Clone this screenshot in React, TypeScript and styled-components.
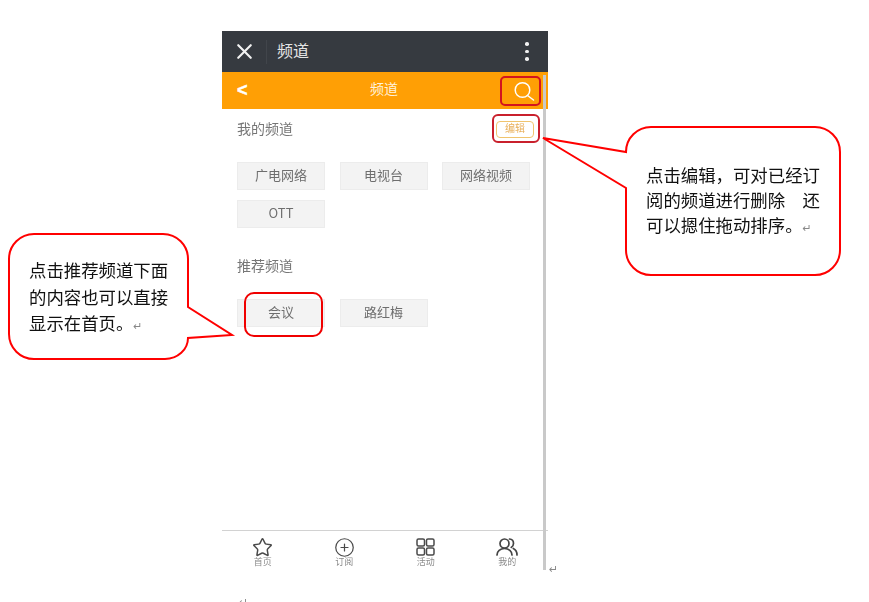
import styled, { createGlobalStyle } from "styled-components";
import { CirclePlus, Star, X } from "lucide-react";

const GlobalStyle = createGlobalStyle`
  html, body {
    margin: 0;
    padding: 0;
    background: #fff;
    font-family: "Noto Sans CJK SC", "Liberation Sans", sans-serif;
  }
`;

const Page = styled.div`
  position: relative;
  width: 869px;
  height: 602px;
  overflow: hidden;
  padding: 31px 0 0 222px;
  box-sizing: border-box;
`;

const Phone = styled.div`
  width: 326px;
  height: 539px;
  display: flex;
  flex-direction: column;
  filter: blur(0.35px);
`;

const TitleBar = styled.div`
  height: 41px;
  flex: none;
  background: #363a40;
  display: flex;
  align-items: center;
  color: #e4e4e4;
  font-size: 16px;
`;

const CloseButton = styled.div`
  width: 44px;
  height: 24px;
  display: flex;
  align-items: center;
  justify-content: center;
  border-right: 1px solid #41454b;
  margin-right: 10px;
  color: #f2f2f2;
`;

const TitleText = styled.div`
  flex: 1;
  padding-bottom: 4px;
`;

const Kebab = styled.div`
  width: 4px;
  margin-right: 19px;
  display: flex;
  flex-direction: column;
  gap: 4px;
`;

const Dot = styled.span`
  width: 3.5px;
  height: 3.5px;
  border-radius: 50%;
  background: #f2f2f2;
`;

const OrangeBar = styled.div`
  height: 37px;
  flex: none;
  background: #ff9f05;
  display: grid;
  grid-template-columns: 60px 1fr 60px;
  align-items: center;
  color: #fff2dc;
  font-size: 14px;
  text-align: center;
`;

const BarTitle = styled.span`
  padding: 0 2px 5px 0;
`;

const BackMark = styled.div`
  font-family: "Liberation Sans", sans-serif;
  font-weight: 700;
  font-size: 18px;
  color: #fff;
  text-align: left;
  padding-left: 15px;
  -webkit-text-stroke: 0.5px #fff;
`;

const SearchSlot = styled.div`
  display: flex;
  justify-content: flex-end;
  padding-right: 13px;
`;

const Content = styled.div`
  flex: 1;
  padding: 0 15px;
`;

const SectionHead = styled.div<{ $top: number }>`
  display: flex;
  align-items: center;
  justify-content: space-between;
  height: 20px;
  margin-top: ${(p) => p.$top}px;
  font-size: 14px;
  color: #767676;
`;

const EditButton = styled.div`
  width: 38px;
  height: 17px;
  box-sizing: border-box;
  margin: 3px -1px 0 0;
  border: 1px solid #f0c46e;
  border-radius: 4px;
  color: #e9b05c;
  font-size: 10px;
  line-height: 12px;
  text-align: center;
`;

const ChipGrid = styled.div<{ $top: number }>`
  display: grid;
  grid-template-columns: repeat(3, 88px);
  column-gap: 14.5px;
  row-gap: 10px;
  margin-top: ${(p) => p.$top}px;
`;

const Chip = styled.div`
  height: 28px;
  box-sizing: border-box;
  background: #f3f3f3;
  border: 1px solid #ececec;
  color: #6e6e6e;
  font-size: 13px;
  line-height: 24px;
  text-align: center;
`;

const BottomNav = styled.div`
  height: 39px;
  flex: none;
  border-top: 1px solid #d2d2d2;
  display: grid;
  grid-template-columns: repeat(4, 1fr);
`;

const NavItem = styled.div`
  display: flex;
  flex-direction: column;
  align-items: center;
  padding-top: 6px;
  color: #4a4a4a;
  font-size: 9px;
  line-height: 10px;
`;

const NavLabel = styled.span`
  color: #8a8a8a;
`;

const IconBox = styled.div`
  height: 20px;
  display: flex;
  align-items: center;
  justify-content: center;
`;

const ScrollTrack = styled.div`
  position: absolute;
  left: 543px;
  top: 75px;
  width: 3px;
  height: 495px;
  background: #c9c9c9;
`;

const Highlight = styled.div<{ $x: number; $y: number; $w: number; $h: number; $r: number; $color: string }>`
  position: absolute;
  left: ${(p) => p.$x}px;
  top: ${(p) => p.$y}px;
  width: ${(p) => p.$w}px;
  height: ${(p) => p.$h}px;
  box-sizing: border-box;
  border: 2px solid ${(p) => p.$color};
  border-radius: ${(p) => p.$r}px;
`;

const Bubble = styled.svg`
  position: absolute;
  left: 0;
  top: 0;
`;

const BubbleText = styled.div<{ $x: number; $y: number; $w: number; $lh: number }>`
  position: absolute;
  left: ${(p) => p.$x}px;
  top: ${(p) => p.$y}px;
  width: ${(p) => p.$w}px;
  font-size: 17.4px;
  line-height: ${(p) => p.$lh}px;
  color: #111;
`;

const ReturnMark = styled.span`
  font-family: "DejaVu Sans", sans-serif;
  font-size: 11px;
  color: #888;
`;

const LooseMark = styled(ReturnMark)<{ $x: number; $y: number }>`
  position: absolute;
  left: ${(p) => p.$x}px;
  top: ${(p) => p.$y}px;
  line-height: 12px;
`;

function SearchIcon() {
  return (
    <svg width="22" height="22" viewBox="0 0 22 22" fill="none" stroke="#fff" strokeWidth="1.5" strokeLinecap="round">
      <circle cx="9.500" cy="10" r="7.300" />
      <path d="M14.500 15.500l6 4.500" />
    </svg>
  );
}

function GridIcon() {
  return (
    <svg width="19" height="18" viewBox="0 0 19 18" fill="none" stroke="#4a4a4a" strokeWidth="1.5">
      <rect x="1" y="1" width="7.500" height="7" rx="1.500" />
      <rect x="10.500" y="1" width="7.500" height="7" rx="1.500" />
      <rect x="1" y="10" width="7.500" height="7" rx="1.500" />
      <rect x="10.500" y="10" width="7.500" height="7" rx="1.500" />
    </svg>
  );
}

function PeopleIcon() {
  return (
    <svg width="22" height="18" viewBox="0 0 22 18" fill="none" stroke="#444" strokeWidth="1.7" strokeLinecap="round">
      <circle cx="8.500" cy="5.500" r="4.500" />
      <path d="M1 17c0-3.800 3.200-6.500 7.500-6.500S16 13.200 16 17" />
      <path d="M13.500 1c2.400.2 4 2.100 4 4.400 0 1.700-.8 3.100-2.300 4" />
      <path d="M17.300 10.500c2.200 1 3.700 3.300 3.700 6.500" />
    </svg>
  );
}

const MY_CHANNELS = ["广电网络", "电视台", "网络视频", "OTT"];
const SUGGESTED = ["会议", "路红梅"];

export default function App() {
  return (
    <Page>
      <GlobalStyle />
      <Phone>
        <TitleBar>
          <CloseButton>
            <X size={25} strokeWidth={2.1} />
          </CloseButton>
          <TitleText>频道</TitleText>
          <Kebab>
            <Dot />
            <Dot />
            <Dot />
          </Kebab>
        </TitleBar>
        <OrangeBar>
          <BackMark>&lt;</BackMark>
          <BarTitle>频道</BarTitle>
          <SearchSlot>
            <SearchIcon />
          </SearchSlot>
        </OrangeBar>
        <Content>
          <SectionHead $top={9}>
            我的频道
            <EditButton>编辑</EditButton>
          </SectionHead>
          <ChipGrid $top={24}>
            {MY_CHANNELS.map((c) => (
              <Chip key={c}>{c}</Chip>
            ))}
          </ChipGrid>
          <SectionHead $top={27}>推荐频道</SectionHead>
          <ChipGrid $top={24}>
            {SUGGESTED.map((c) => (
              <Chip key={c}>{c}</Chip>
            ))}
          </ChipGrid>
        </Content>
        <BottomNav>
          <NavItem>
            <IconBox>
              <Star size={21} strokeWidth={1.7} />
            </IconBox>
            <NavLabel>首页</NavLabel>
          </NavItem>
          <NavItem>
            <IconBox>
              <CirclePlus size={21} strokeWidth={1.4} />
            </IconBox>
            <NavLabel>订阅</NavLabel>
          </NavItem>
          <NavItem>
            <IconBox>
              <GridIcon />
            </IconBox>
            <NavLabel>活动</NavLabel>
          </NavItem>
          <NavItem>
            <IconBox>
              <PeopleIcon />
            </IconBox>
            <NavLabel>我的</NavLabel>
          </NavItem>
        </BottomNav>
      </Phone>

      <ScrollTrack />
      <Highlight $x={500} $y={76} $w={41} $h={30} $r={5} $color="#d3141f" />
      <Highlight $x={492} $y={114} $w={48} $h={29} $r={6} $color="#c9202c" />
      <Highlight $x={244} $y={292} $w={79} $h={45} $r={10} $color="#f00000" />

      <Bubble width="869" height="602" fill="#fff" stroke="#ff0000" strokeWidth="2">
        <path d="M651 127H815a25 25 0 0 1 25 25V250a25 25 0 0 1 -25 25H651a25 25 0 0 1 -25 -25V188L543 138 626 152a25 25 0 0 1 25 -25Z" />
        <path d="M34 234H163a25 25 0 0 1 25 25V307L232 335 188 338A23 21 0 0 1 165 359H34a25 25 0 0 1 -25 -25V259a25 25 0 0 1 25 -25Z" />
      </Bubble>
      <BubbleText $x={646} $y={162} $w={176} $lh={25}>
        点击编辑，可对已经订阅的频道进行删除&#12288;还可以摁住拖动排序。<ReturnMark>↵</ReturnMark>
      </BubbleText>
      <BubbleText $x={29} $y={257} $w={142} $lh={26.500}>
        点击推荐频道下面的内容也可以直接显示在首页。<ReturnMark>↵</ReturnMark>
      </BubbleText>
      <LooseMark $x={549} $y={564}>↵</LooseMark>
      <LooseMark $x={239} $y={597}>↵</LooseMark>
    </Page>
  );
}
